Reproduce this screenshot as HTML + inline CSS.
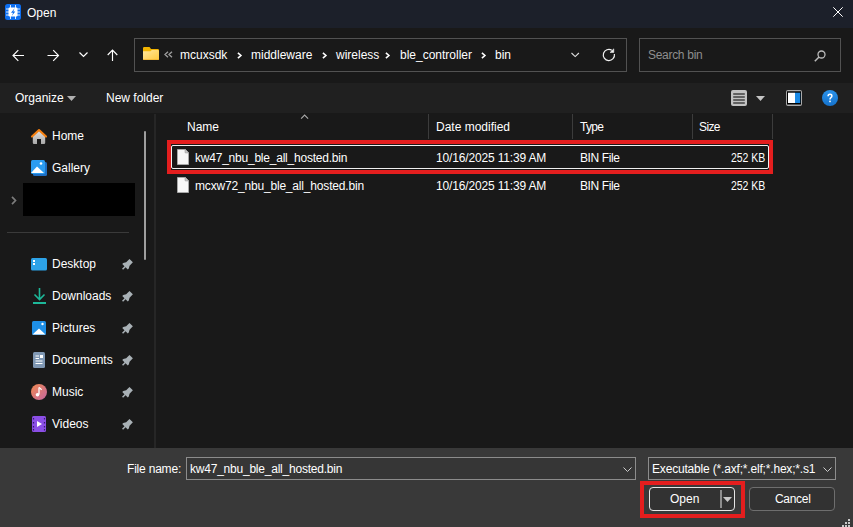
<!DOCTYPE html>
<html><head><meta charset="utf-8">
<style>
*{box-sizing:border-box}
html,body{margin:0;padding:0}
body{width:853px;height:527px;overflow:hidden;position:relative;background:#191919;font-family:"Liberation Sans",sans-serif;font-size:12px;color:#fff}
.a{position:absolute}
.t{position:absolute;font-size:12px;line-height:14px;white-space:nowrap;color:#fff}
svg{position:absolute;overflow:visible}
</style></head><body>

<!-- title bar -->
<div class="a" style="left:0;top:0;width:853px;height:28px;background:#1c202a"></div>
<svg style="left:5px;top:4px" width="16" height="16"><rect x="0" y="0" width="16" height="16" rx="2.5" fill="#0d6ef0"/><path d="M5.5 1V15M10.5 1V15M1 5H15M1 8H15M1 11H15" stroke="#fff" stroke-width="1" opacity="0.85"/><rect x="3.5" y="3.5" width="9" height="9" rx="1.2" fill="#fff"/><path d="M9.6 4.2L6 8.7H8.1L6.8 12L10.3 7.4H8.3Z" fill="#0d6ef0"/></svg>
<div class="t" style="left:27px;top:6px">Open</div>
<svg style="left:833px;top:7px" width="10" height="10"><path d="M0.3 0.3L9.7 9.7M9.7 0.3L0.3 9.7" stroke="#fff" stroke-width="1"/></svg>

<!-- nav row -->
<svg style="left:12px;top:49px" width="13" height="12"><path d="M12 6.5H1.2M6.3 1.2L1 6.5L6.3 11.8" stroke="#fff" stroke-width="1.15" fill="none"/></svg>
<svg style="left:47px;top:49px" width="13" height="12"><path d="M0.5 6.5H11.3M6.2 1.2L11.5 6.5L6.2 11.8" stroke="#fff" stroke-width="1.15" fill="none"/></svg>
<svg style="left:79px;top:52px" width="10" height="6"><path d="M0.5 0.5L4.5 4.5L8.5 0.5" stroke="#fff" stroke-width="1.2" fill="none"/></svg>
<svg style="left:107px;top:49px" width="12" height="12"><path d="M5.5 12V1.2M0.7 6L5.5 1L10.3 6" stroke="#fff" stroke-width="1.15" fill="none"/></svg>

<div class="a" style="left:134px;top:38px;width:493px;height:34px;border:1px solid #525252"></div>
<svg style="left:143px;top:47px" width="16" height="13"><defs><linearGradient id="fg" x1="0" y1="0" x2="1" y2="1"><stop offset="0" stop-color="#ffe7a0"/><stop offset="1" stop-color="#ffc93c"/></linearGradient></defs><path d="M0 1.2Q0 0 1.2 0H6.5L8 2H14.8Q16 2 16 3.2V11.8Q16 13 14.8 13H1.2Q0 13 0 11.8Z" fill="#f2b400"/><path d="M0 4.2L7.5 4.2L8.8 3H14.8Q16 3 16 4.2V11.8Q16 13 14.8 13H1.2Q0 13 0 11.8Z" fill="url(#fg)"/><rect x="0" y="12" width="16" height="1" fill="#f0b030" opacity="0.7"/></svg>
<svg style="left:164px;top:51px" width="9" height="7"><path d="M4 0.8L1 3.5L4 6.2M8 0.8L5 3.5L8 6.2" stroke="#a0a0a0" stroke-width="1.3" fill="none"/></svg>
<div class="t" style="left:180px;top:48px">mcuxsdk</div>
<svg style="left:237px;top:52px" width="5" height="7"><path d="M0.9 0.9L3.9 3.5L0.9 6.1" stroke="#fff" stroke-width="1.6" fill="none"/></svg>
<div class="t" style="left:251px;top:48px">middleware</div>
<svg style="left:322px;top:52px" width="5" height="7"><path d="M0.9 0.9L3.9 3.5L0.9 6.1" stroke="#fff" stroke-width="1.6" fill="none"/></svg>
<div class="t" style="left:336px;top:48px">wireless</div>
<svg style="left:385px;top:52px" width="5" height="7"><path d="M0.9 0.9L3.9 3.5L0.9 6.1" stroke="#fff" stroke-width="1.6" fill="none"/></svg>
<div class="t" style="left:400px;top:48px">ble_controller</div>
<svg style="left:481px;top:52px" width="5" height="7"><path d="M0.9 0.9L3.9 3.5L0.9 6.1" stroke="#fff" stroke-width="1.6" fill="none"/></svg>
<div class="t" style="left:495px;top:48px">bin</div>
<svg style="left:571px;top:52px" width="9" height="6"><path d="M0.5 1L4.2 4.6L7.9 1" stroke="#e0e0e0" stroke-width="1.1" fill="none"/></svg>
<svg style="left:602px;top:48px" width="14" height="14"><path d="M12.4 6A5.6 5.6 0 1 1 9.8 2.2" stroke="#f0f0f0" stroke-width="1.2" fill="none"/><path d="M11.8 0.8V4.5H8Z" fill="#f0f0f0" stroke="#f0f0f0" stroke-width="0.5" stroke-linejoin="round"/></svg>

<div class="a" style="left:639px;top:38px;width:202px;height:34px;border:1px solid #525252"></div>
<div class="t" style="left:648px;top:48px;color:#8e8e8e;letter-spacing:-0.3px">Search bin</div>
<svg style="left:814px;top:50px" width="12" height="12"><circle cx="7.5" cy="4.5" r="3.5" stroke="#bbb" stroke-width="1.3" fill="none"/><path d="M5 7L0.8 11.2" stroke="#bbb" stroke-width="1.5"/></svg>

<!-- command bar -->
<div class="a" style="left:0;top:83px;width:853px;height:30px;background:#202020"></div>
<div class="t" style="left:15px;top:91px">Organize</div>
<svg style="left:67px;top:96px" width="9" height="5"><path d="M0 0H9L4.5 5Z" fill="#b0b0b0"/></svg>
<div class="t" style="left:106px;top:91px">New folder</div>

<!-- footer -->
<div class="a" style="left:0;top:448px;width:853px;height:79px;background:#393939"></div>


<!-- right toolbar icons -->
<svg style="left:731px;top:90px" width="16" height="16"><rect x="0" y="0" width="16" height="16" rx="2" fill="#c2c2c2"/><path d="M2.2 4H13.8M2.2 7H13.8M2.2 10H13.8M2.2 13H13.8" stroke="#000" stroke-width="1.1"/></svg>
<svg style="left:756px;top:96px" width="9" height="5"><path d="M0 0H9L4.5 5Z" fill="#c4c4c4"/></svg>
<svg style="left:786px;top:90px" width="16" height="16"><rect x="0" y="0" width="16" height="16" rx="2" fill="#a9a9a9"/><rect x="1" y="1.3" width="14" height="13.2" fill="#000"/><rect x="2" y="2.7" width="7" height="10.3" fill="#fff"/><rect x="9" y="2.7" width="5.2" height="10.3" fill="#1a8ae6"/></svg>
<svg style="left:822px;top:90px" width="16" height="16"><defs><linearGradient id="hg" x1="0" y1="0" x2="0" y2="1"><stop offset="0" stop-color="#2b93ea"/><stop offset="1" stop-color="#1572cc"/></linearGradient></defs><circle cx="8" cy="8" r="8" fill="url(#hg)"/><path d="M6.1 6.2Q6.1 4.3 8 4.3Q9.9 4.3 9.9 6Q9.9 7 8.9 7.7Q8 8.3 8 9.5" stroke="#fff" stroke-width="1.5" fill="none"/><rect x="7.2" y="10.6" width="1.6" height="1.6" fill="#fff"/></svg>

<!-- nav pane -->
<svg style="left:31px;top:128px" width="16" height="17"><defs><linearGradient id="hb" x1="0" y1="0" x2="0" y2="1"><stop offset="0" stop-color="#e0e0e0"/><stop offset="1" stop-color="#a8a8a8"/></linearGradient></defs><path d="M8 2.5L14.2 8.2V14.8Q14.2 16 13 16H10V11H6V16H3Q1.8 16 1.8 14.8V8.2Z" fill="url(#hb)"/><path d="M1 8.6L8 2L15 8.6" stroke="#f57f0f" stroke-width="2.1" fill="none" stroke-linecap="round" stroke-linejoin="round"/></svg>
<div class="t" style="left:52px;top:129px">Home</div>
<svg style="left:31px;top:160px" width="16" height="16"><rect x="2" y="2" width="14" height="14" rx="1.5" fill="#1d6fc4"/><rect x="0" y="0" width="14" height="14" rx="1.5" fill="#2b9cf0"/><path d="M0 13L6 6.5L13 13Z" fill="#fff"/><circle cx="10" cy="3.5" r="1.3" fill="#fff"/></svg>
<div class="t" style="left:52px;top:161px">Gallery</div>
<svg style="left:11px;top:196px" width="6" height="9"><path d="M1 0.9L4.5 4.5L1 8.1" stroke="#7c7c7c" stroke-width="1.7" fill="none"/></svg>
<div class="a" style="left:23px;top:183px;width:112px;height:33px;background:#000"></div>
<div class="a" style="left:7px;top:232px;width:122px;height:1px;background:#3a3a3a"></div>

<svg style="left:31px;top:258px" width="16" height="13"><rect x="0" y="0" width="16" height="12.5" rx="1.5" fill="#2da3e8"/><rect x="2" y="2" width="2" height="2" fill="#fff"/><rect x="2" y="5" width="2" height="2" fill="#fff"/></svg>
<div class="t" style="left:52px;top:257px">Desktop</div>
<svg style="left:33px;top:288px" width="13" height="16"><path d="M6.5 0V11M1.5 6.5L6.5 11.5L11.5 6.5" stroke="#1db899" stroke-width="1.6" fill="none"/><rect x="0" y="14" width="13" height="2" fill="#1db899"/></svg>
<div class="t" style="left:52px;top:289px">Downloads</div>
<svg style="left:32px;top:321px" width="14" height="14"><rect x="0" y="0" width="14" height="14" rx="1.5" fill="#1e8fe6"/><path d="M0.5 13.5L7 7.5L13.5 13.5Z" fill="#fff"/><circle cx="10.5" cy="3" r="1.2" fill="#fff"/></svg>
<div class="t" style="left:52px;top:321px">Pictures</div>
<svg style="left:33px;top:352px" width="12" height="16"><rect x="0" y="0" width="12" height="16" rx="1.5" fill="#7f97b3"/><path d="M2.5 4H6M2.5 6.5H6M2.5 9H9.5M2.5 11.5H9.5" stroke="#fff" stroke-width="1"/><rect x="7" y="3" width="3" height="3" fill="#fff"/></svg>
<div class="t" style="left:52px;top:353px">Documents</div>
<svg style="left:31px;top:384px" width="16" height="16"><defs><linearGradient id="mg" x1="0" y1="0" x2="1" y2="1"><stop offset="0" stop-color="#f08a50"/><stop offset="1" stop-color="#c466a0"/></linearGradient></defs><circle cx="8" cy="8" r="8" fill="url(#mg)"/><path d="M8 3.5V10.5" stroke="#fff" stroke-width="1.3"/><circle cx="6.5" cy="10.8" r="1.8" fill="#fff"/><path d="M8 3.5Q10 4.5 10.5 6" stroke="#fff" stroke-width="1.2" fill="none"/></svg>
<div class="t" style="left:52px;top:385px">Music</div>
<svg style="left:32px;top:416px" width="14" height="16"><rect x="0" y="0" width="14" height="16" rx="1.5" fill="#8b4fe6"/><path d="M5 5V11L10 8Z" fill="#fff"/><path d="M1.5 2V3.5M1.5 6V7.5M1.5 10V11.5M1.5 13V14.5M12.5 2V3.5M12.5 6V7.5M12.5 10V11.5M12.5 13V14.5" stroke="#3a1a70" stroke-width="1.2"/></svg>
<div class="t" style="left:52px;top:417px">Videos</div>
<svg style="left:122px;top:258px" width="13" height="13"><g transform="translate(8.9,2.9) rotate(45)"><path d="M-2.4 -0.4H2.4V4.3L3.9 6.9V8.3H0.75V11.8H-0.75V8.3H-3.9V6.9L-2.4 4.3Z" fill="#a9b1b6"/></g></svg>
<svg style="left:122px;top:290px" width="13" height="13"><g transform="translate(8.9,2.9) rotate(45)"><path d="M-2.4 -0.4H2.4V4.3L3.9 6.9V8.3H0.75V11.8H-0.75V8.3H-3.9V6.9L-2.4 4.3Z" fill="#a9b1b6"/></g></svg>
<svg style="left:122px;top:322px" width="13" height="13"><g transform="translate(8.9,2.9) rotate(45)"><path d="M-2.4 -0.4H2.4V4.3L3.9 6.9V8.3H0.75V11.8H-0.75V8.3H-3.9V6.9L-2.4 4.3Z" fill="#a9b1b6"/></g></svg>
<svg style="left:122px;top:354px" width="13" height="13"><g transform="translate(8.9,2.9) rotate(45)"><path d="M-2.4 -0.4H2.4V4.3L3.9 6.9V8.3H0.75V11.8H-0.75V8.3H-3.9V6.9L-2.4 4.3Z" fill="#a9b1b6"/></g></svg>
<svg style="left:122px;top:386px" width="13" height="13"><g transform="translate(8.9,2.9) rotate(45)"><path d="M-2.4 -0.4H2.4V4.3L3.9 6.9V8.3H0.75V11.8H-0.75V8.3H-3.9V6.9L-2.4 4.3Z" fill="#a9b1b6"/></g></svg>
<svg style="left:122px;top:418px" width="13" height="13"><g transform="translate(8.9,2.9) rotate(45)"><path d="M-2.4 -0.4H2.4V4.3L3.9 6.9V8.3H0.75V11.8H-0.75V8.3H-3.9V6.9L-2.4 4.3Z" fill="#a9b1b6"/></g></svg>

<!-- scrollbar & divider -->
<div class="a" style="left:144px;top:131px;width:2px;height:129px;background:#9e9e9e;border-radius:1px"></div>
<div class="a" style="left:154px;top:114px;width:2px;height:334px;background:#262626"></div>

<!-- header -->
<div class="t" style="left:187px;top:120px">Name</div>
<svg style="left:300px;top:114px" width="9" height="5"><path d="M1.1 4.6L4.6 1L8.1 4.6" stroke="#aaa" stroke-width="1.1" fill="none"/></svg>
<div class="a" style="left:428px;top:114px;width:1px;height:25px;background:#3c3c3c"></div>
<div class="t" style="left:436px;top:120px">Date modified</div>
<div class="a" style="left:572px;top:114px;width:1px;height:25px;background:#3c3c3c"></div>
<div class="t" style="left:580px;top:120px;letter-spacing:-0.7px">Type</div>
<div class="a" style="left:692px;top:114px;width:1px;height:25px;background:#3c3c3c"></div>
<div class="t" style="left:699px;top:120px;letter-spacing:-0.6px">Size</div>
<div class="a" style="left:772px;top:114px;width:1px;height:25px;background:#3c3c3c"></div>

<!-- rows -->
<div class="a" style="left:167px;top:140px;width:606px;height:34px;border:4px solid #e41e1e"></div>
<div class="a" style="left:171px;top:145px;width:598px;height:24px;border:1px solid #f0f0f0;border-radius:2px"></div>
<svg style="left:177px;top:149px" width="12" height="16"><path d="M0.5 0.5H8.2L11.5 3.8V15.5H0.5Z" fill="#f7f7f7" stroke="#a8a8a8"/><path d="M8.2 0.5V3.8H11.5Z" fill="#d6d6d6" stroke="#a8a8a8" stroke-linejoin="round"/></svg>
<div class="t" style="left:195px;top:151px;letter-spacing:-0.22px">kw47_nbu_ble_all_hosted.bin</div>
<div class="t" style="left:436px;top:151px;letter-spacing:-0.16px">10/16/2025 11:39 AM</div>
<div class="t" style="left:580px;top:151px;letter-spacing:-0.4px">BIN File</div>
<div class="t" style="right:88px;top:151px;transform:scaleX(0.875);transform-origin:100% 50%">252 KB</div>
<svg style="left:177px;top:177px" width="12" height="16"><path d="M0.5 0.5H8.2L11.5 3.8V15.5H0.5Z" fill="#f7f7f7" stroke="#a8a8a8"/><path d="M8.2 0.5V3.8H11.5Z" fill="#d6d6d6" stroke="#a8a8a8" stroke-linejoin="round"/></svg>
<div class="t" style="left:195px;top:179px;letter-spacing:-0.18px">mcxw72_nbu_ble_all_hosted.bin</div>
<div class="t" style="left:436px;top:179px;letter-spacing:-0.16px">10/16/2025 11:39 AM</div>
<div class="t" style="left:580px;top:179px;letter-spacing:-0.4px">BIN File</div>
<div class="t" style="right:88px;top:179px;transform:scaleX(0.875);transform-origin:100% 50%">252 KB</div>

<!-- footer content -->
<div class="t" style="left:127px;top:462px;letter-spacing:-0.2px">File name:</div>
<div class="a" style="left:186px;top:457px;width:450px;height:23px;border:1px solid #8c8c8c;background:#363636"></div>
<div class="t" style="left:190px;top:462px;letter-spacing:-0.22px">kw47_nbu_ble_all_hosted.bin</div>
<svg style="left:623px;top:467px" width="9" height="5"><path d="M0.5 0.5L4.5 4.5L8.5 0.5" stroke="#ccc" stroke-width="1" fill="none"/></svg>
<div class="a" style="left:648px;top:457px;width:188px;height:23px;border:1px solid #8c8c8c;background:#363636;overflow:hidden"><div class="t" style="left:3px;top:4px;letter-spacing:-0.18px">Executable (*.axf;*.elf;*.hex;*.s1</div></div>
<div class="a" style="left:817px;top:458px;width:18px;height:21px;background:#363636"></div>
<svg style="left:823px;top:467px" width="9" height="5"><path d="M0.5 0.5L4.5 4.5L8.5 0.5" stroke="#ccc" stroke-width="1" fill="none"/></svg>

<div class="a" style="left:640px;top:481px;width:105px;height:37px;border:4px solid #e41e1e"></div>
<div class="a" style="left:649px;top:487px;width:86px;height:24px;border:1.5px solid #e6e6e6;border-radius:4px;background:#323232"></div>
<div class="t" style="left:670px;top:492px">Open</div>
<div class="a" style="left:720px;top:490px;width:2px;height:18px;background:#8e8e8e"></div>
<svg style="left:723px;top:497px" width="9" height="5"><path d="M0 0H9L4.5 5Z" fill="#c8c8c8"/></svg>
<div class="a" style="left:749px;top:487px;width:86px;height:24px;border:1px solid #6e6e6e;border-radius:4px;background:#323232"></div>
<div class="t" style="left:775px;top:492px;letter-spacing:-0.3px">Cancel</div>

<div class="a" style="left:848px;top:519px;width:2px;height:2px;background:#c8c8c8"></div><div class="a" style="left:845px;top:522px;width:2px;height:2px;background:#c8c8c8"></div><div class="a" style="left:848px;top:522px;width:2px;height:2px;background:#c8c8c8"></div><div class="a" style="left:842px;top:525px;width:2px;height:2px;background:#c8c8c8"></div><div class="a" style="left:845px;top:525px;width:2px;height:2px;background:#c8c8c8"></div><div class="a" style="left:848px;top:525px;width:2px;height:2px;background:#c8c8c8"></div>
</body></html>
